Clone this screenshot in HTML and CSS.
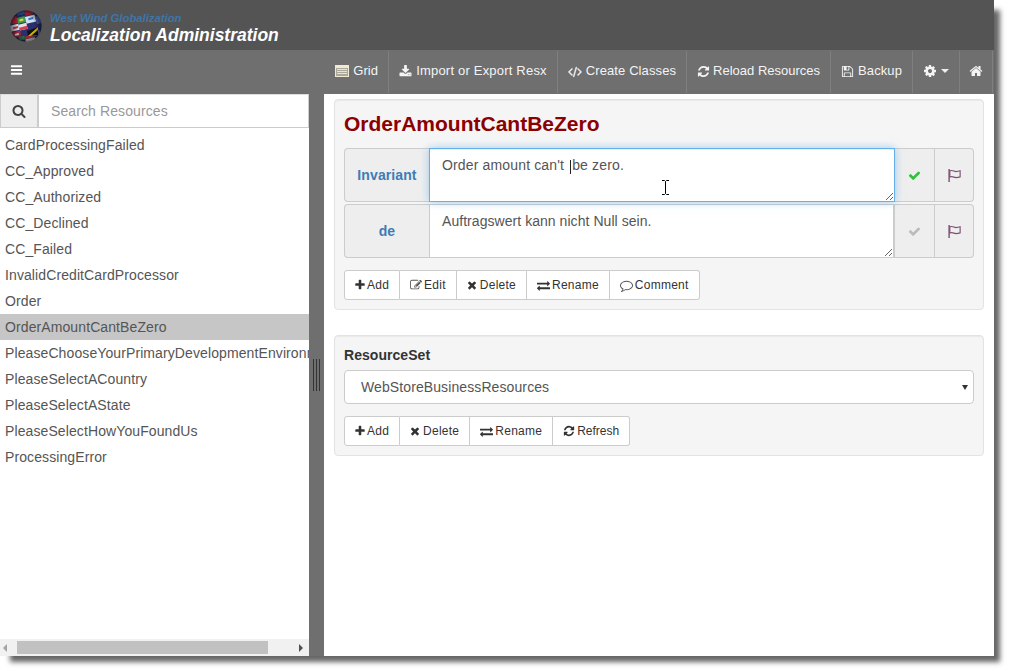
FILE: index.html
```html
<!DOCTYPE html>
<html lang="en">
<head>
<meta charset="utf-8">
<title>Localization Administration</title>
<link rel="stylesheet" href="styles.css">
</head>
<body>
<svg class="defs" width="0" height="0" aria-hidden="true">
<symbol id="i-bars" viewBox="0 0 1792 1792"><path d="M1664 1344v128q0 26-19 45t-45 19h-1408q-26 0-45-19t-19-45v-128q0-26 19-45t45-19h1408q26 0 45 19t19 45zm0-512v128q0 26-19 45t-45 19h-1408q-26 0-45-19t-19-45v-128q0-26 19-45t45-19h1408q26 0 45 19t19 45zm0-512v128q0 26-19 45t-45 19h-1408q-26 0-45-19t-19-45v-128q0-26 19-45t45-19h1408q26 0 45 19t19 45z"/></symbol>
<symbol id="i-search" viewBox="0 0 1792 1792"><path d="M1216 832q0-185-131.5-316.5t-316.5-131.5-316.5 131.5-131.5 316.5 131.5 316.5 316.5 131.5 316.5-131.5 131.5-316.5zm512 832q0 52-38 90t-90 38q-54 0-90-38l-343-342q-179 124-399 124-143 0-273.5-55.5t-225-150-150-225-55.5-273.5 55.5-273.5 150-225 225-150 273.5-55.5 273.5 55.5 225 150 150 225 55.5 273.5q0 220-124 399l343 343q37 37 37 90z"/></symbol>
<symbol id="i-check" viewBox="0 0 1792 1792"><path d="M1671 566q0 40-28 68l-724 724-136 136q-28 28-68 28t-68-28l-136-136-362-362q-28-28-28-68t28-68l136-136q28-28 68-28t68 28l294 295 656-657q28-28 68-28t68 28l136 136q28 28 28 68z"/></symbol>
<symbol id="i-plus" viewBox="0 0 1792 1792"><path d="M1600 736v192q0 40-28 68t-68 28h-416v416q0 40-28 68t-68 28h-192q-40 0-68-28t-28-68v-416h-416q-40 0-68-28t-28-68v-192q0-40 28-68t68-28h416v-416q0-40 28-68t68-28h192q40 0 68 28t28 68v416h416q40 0 68 28t28 68z"/></symbol>
<symbol id="i-times" viewBox="0 0 1792 1792"><path d="M1490 1322q0 40-28 68l-136 136q-28 28-68 28t-68-28l-294-294-294 294q-28 28-68 28t-68-28l-136-136q-28-28-28-68t28-68l294-294-294-294q-28-28-28-68t28-68l136-136q28-28 68-28t68 28l294 294 294-294q28-28 68-28t68 28l136 136q28 28 28 68t-28 68l-294 294 294 294q28 28 28 68z"/></symbol>
<symbol id="i-refresh" viewBox="0 0 1792 1792"><path d="M1639 1056q0 5-1 7-64 268-268 434.5t-478 166.5q-146 0-282.5-55t-243.5-157l-129 129q-19 19-45 19t-45-19-19-45v-448q0-26 19-45t45-19h448q26 0 45 19t19 45-19 45l-137 137q71 66 161 102t187 36q134 0 250-65t186-179q11-17 53-117 8-23 30-23h192q13 0 22.5 9.5t9.5 22.5zm25-800v448q0 26-19 45t-45 19h-448q-26 0-45-19t-19-45 19-45l138-138q-148-137-349-137-134 0-250 65t-186 179q-11 17-53 117-8 23-30 23h-199q-13 0-22.5-9.5t-9.5-22.5v-7q65-268 270-434.5t480-166.5q146 0 284 55.5t245 156.5l130-129q19-19 45-19t45 19 19 45z"/></symbol>
<symbol id="i-home" viewBox="0 0 1792 1792"><path d="M1472 992v480q0 26-19 45t-45 19h-384v-384h-256v384h-384q-26 0-45-19t-19-45v-480q0-1 .5-3t.5-3l575-474 575 474q1 2 1 6zm223-69l-62 74q-8 9-21 11h-3q-13 0-21-7l-692-577-692 577q-12 8-24 7-13-2-21-11l-62-74q-8-10-7-23.5t11-21.5l719-599q32-26 76-26t76 26l244 204v-195q0-14 9-23t23-9h192q14 0 23 9t9 23v408l219 182q10 8 11 21.5t-7 23.5z"/></symbol>
<symbol id="i-cog" viewBox="0 0 1792 1792"><path d="M1152 896q0-106-75-181t-181-75-181 75-75 181 75 181 181 75 181-75 75-181zm512-109v222q0 12-8 23t-20 13l-185 28q-19 54-39 91 35 50 107 138 10 12 10 25t-9 23q-27 37-99 108t-94 71q-12 0-26-9l-138-108q-44 23-91 38-16 136-29 186-7 28-36 28h-222q-14 0-24.5-8.5t-11.5-21.5l-28-184q-49-16-90-37l-141 107q-10 9-25 9-14 0-25-11-126-114-165-168-7-10-7-23 0-12 8-23 15-21 51-66.5t54-70.5q-27-50-41-99l-183-27q-13-2-21-12.5t-8-23.5v-222q0-12 8-23t19-13l186-28q14-46 39-92-40-57-107-138-10-12-10-24 0-10 9-23 26-36 98.5-107.5t94.5-71.5q13 0 26 10l138 107q44-23 91-38 16-136 29-186 7-28 36-28h222q14 0 24.5 8.5t11.5 21.5l28 184q49 16 90 37l142-107q9-9 24-9 13 0 25 10 129 119 165 170 7 8 7 22 0 12-8 23-15 21-51 66.5t-54 70.5q26 50 41 98l183 28q13 2 21 12.5t8 23.5z"/></symbol>
<symbol id="i-code" viewBox="0 0 1792 1792"><path stroke="currentColor" stroke-width="70" d="M553 1399l-50 50q-10 10-23 10t-23-10l-466-466q-10-10-10-23t10-23l466-466q10-10 23-10t23 10l50 50q10 10 10 23t-10 23l-393 393 393 393q10 10 10 23t-10 23zm591-1067l-373 1291q-4 13-15.5 19.5t-23.5 2.5l-62-17q-13-4-19.5-15.5t-2.5-24.5l373-1291q4-13 15.5-19.5t23.5-2.5l62 17q13 4 19.5 15.5t2.5 24.5zm657 651l-466 466q-10 10-23 10t-23-10l-50-50q-10-10-10-23t10-23l393-393-393-393q-10-10-10-23t10-23l50-50q10-10 23-10t23 10l466 466q10 10 10 23t-10 23z"/></symbol>
<symbol id="i-download" viewBox="0 0 1792 1792"><path d="M1344 1344q0-26-19-45t-45-19-45 19-19 45 19 45 45 19 45-19 19-45zm256 0q0-26-19-45t-45-19-45 19-19 45 19 45 45 19 45-19 19-45zm128-224v320q0 40-28 68t-68 28h-1472q-40 0-68-28t-28-68v-320q0-40 28-68t68-28h465l135 136q58 56 136 56t136-56l136-136h464q40 0 68 28t28 68zm-325-569q17 41-14 70l-448 448q-18 19-45 19t-45-19l-448-448q-31-29-14-70 17-39 59-39h256v-448q0-26 19-45t45-19h256q26 0 45 19t19 45v448h256q42 0 59 39z"/></symbol>
<symbol id="i-exchange" viewBox="0 0 1792 1792"><path d="M1792 1184v192q0 13-9.5 22.5t-22.5 9.5h-1376v192q0 13-9.5 22.5t-22.5 9.5q-12 0-24-10l-319-320q-9-9-9-22 0-14 9-23l320-320q9-9 23-9 13 0 22.5 9.5t9.5 22.5v192h1376q13 0 22.5 9.5t9.5 22.5zm0-544q0 14-9 23l-320 320q-9 9-23 9-13 0-22.5-9.5t-9.5-22.5v-192h-1376q-13 0-22.5-9.5t-9.5-22.5v-192q0-13 9.5-22.5t22.5-9.5h1376v-192q0-14 9-23t23-9q12 0 24 10l319 319q9 9 9 23z"/></symbol>
<symbol id="i-edit" viewBox="0 0 1792 1792"><path d="M888 1184l116-116-152-152-116 116v56h96v96h56zm440-720q-16-16-33 1l-350 350q-17 17-1 33t33-1l350-350q17-17 1-33zm80 594v190q0 119-84.5 203.5t-203.5 84.5h-832q-119 0-203.5-84.5t-84.5-203.5v-832q0-119 84.5-203.5t203.5-84.5h832q63 0 117 25 15 7 18 23 3 17-9 29l-49 49q-14 14-32 8-23-6-45-6h-832q-66 0-113 47t-47 113v832q0 66 47 113t113 47h832q66 0 113-47t47-113v-126q0-13 9-22l64-64q15-15 35-7t20 29zm-96-738l288 288-672 672h-288v-288zm444 132l-92 92-288-288 92-92q28-28 68-28t68 28l152 152q28 28 28 68t-28 68z"/></symbol>
<symbol id="i-comment" viewBox="0 0 1792 1792"><path d="M896 384q-204 0-381.5 69.5t-282 187.5-104.5 255q0 112 71.5 213.5t201.5 175.5l87 50-27 96q-24 91-70 172 152-63 275-171l43-38 57 6q69 8 130 8 204 0 381.5-69.5t282-187.5 104.5-255-104.5-255-282-187.5-381.5-69.5zm896 512q0 174-120 321.5t-326 233-450 85.5q-70 0-145-8-198 175-460 242-49 14-114 22h-5q-15 0-27-10.5t-16-27.5v-1q-3-4-.5-12t2-10 4.5-9.5l6-9 7-8.5 8-9q7-8 31-34.5t34.5-38 31-39.5 32.5-51 27-59 26-76q-157-89-247.5-220t-90.5-281q0-174 120-321.5t326-233 450-85.5 450 85.5 326 233 120 321.5z"/></symbol>
<symbol id="i-save" viewBox="0 0 1792 1792"><path d="M512 1536h768v-384h-768v384zm896 0h128v-896q0-14-10-38.5t-20-34.5l-281-281q-10-10-34-20t-39-10v416q0 40-28 68t-68 28h-576q-40 0-68-28t-28-68v-416h-128v1280h128v-416q0-40 28-68t68-28h832q40 0 68 28t28 68v416zm-384-928v-320q0-13-9.5-22.5t-22.5-9.5h-192q-13 0-22.5 9.5t-9.5 22.5v320q0 13 9.5 22.5t22.5 9.5h192q13 0 22.5-9.5t9.5-22.5zm640 32v928q0 40-28 68t-68 28h-1344q-40 0-68-28t-28-68v-1344q0-40 28-68t68-28h928q40 0 88 20t76 48l280 280q28 28 48 76t20 88z"/></symbol>
<symbol id="i-grid" viewBox="0 0 14 12"><path fill-rule="evenodd" d="M0 0h14v12h-14zM1 3v8h12v-8z"/><path d="M1 3h12v8h-12z" opacity=".45"/><path d="M2 4h10v1h-10zM2 6h10v1h-10zM2 8h10v1h-10z" opacity=".9"/></symbol>
<symbol id="i-flag" viewBox="0 0 16 16"><path d="M1.500 1h1.500v14h-1.500z"/><path fill="none" stroke="currentColor" stroke-width="1.200" d="M3 3c3-1.200 4.500 .8 6.500 .8 1.500 0 3-.3 4.500-.8v6.500c-1.500 .5-3 .7-4.500 .7-2 0-3.500-1.800-6.500-.6z"/></symbol>
</svg>

<div class="window">
  <header class="masthead">
    <svg class="logo" viewBox="0 0 32 32" width="32" height="32" aria-hidden="true">
      <defs>
        <clipPath id="globe"><circle cx="16" cy="16" r="15.500"/></clipPath>
        <radialGradient id="shade" cx=".5" cy=".5" r=".5">
          <stop offset=".55" stop-color="#000" stop-opacity="0"/>
          <stop offset="1" stop-color="#000" stop-opacity=".6"/>
        </radialGradient>
      </defs>
      <g clip-path="url(#globe)">
        <rect width="32" height="32" fill="#2a2f6e"/>
        <g transform="rotate(-14 16 16)">
          <rect x="10" y="0" width="8" height="4" fill="#3a60b0"/>
          <rect x="18" y="0" width="8" height="6" fill="#c8283c"/>
          <rect x="2" y="4" width="7" height="7" fill="#b8253a"/>
          <rect x="9" y="6" width="8" height="6" fill="#3c9a48"/>
          <rect x="11" y="8" width="4" height="2" fill="#e0d050"/>
          <rect x="17" y="7" width="10" height="7" fill="#cfe0f0"/>
          <rect x="20" y="9" width="5" height="2" fill="#3a70c0"/>
          <rect x="0" y="12" width="9" height="6" fill="#d8d8e0"/>
          <rect x="3" y="14" width="5" height="2" fill="#c03040"/>
          <rect x="9" y="13" width="8" height="6" fill="#e8e0e0"/>
          <rect x="9" y="16" width="8" height="3" fill="#d04050"/>
          <rect x="27" y="9" width="5" height="8" fill="#5060a8"/>
          <rect x="1" y="19" width="8" height="6" fill="#b02840"/>
          <rect x="3" y="21" width="4" height="2" fill="#f0f0f0"/>
          <rect x="19" y="23" width="9" height="5" fill="#7a78b0"/>
          <rect x="6" y="25" width="6" height="4" fill="#2f8a50"/>
          <rect x="12" y="26" width="8" height="3" fill="#c83040"/>
          <rect x="12" y="29" width="10" height="3" fill="#e8e8e8"/>
        </g>
        <polygon points="17,21 28,17 28,25 18,26" fill="#111"/>
        <polygon points="18,26 28,17 28,20 21,26" fill="#d8c020"/>
        <rect width="32" height="32" fill="url(#shade)"/>
      </g>
    </svg>
    <div class="brand">
      <div class="brand-sub">West Wind Globalization</div>
      <div class="brand-title">Localization Administration</div>
    </div>
  </header>

  <nav class="toolbar">
    <a class="nav-toggle"><svg class="ic ic-bars"><use href="#i-bars"/></svg></a>
    <div class="nav-items">
      <a class="nav-item nav-first"><svg class="ic ic-grid"><use href="#i-grid"/></svg>Grid</a>
      <a class="nav-item nav-wide"><svg class="ic"><use href="#i-download"/></svg>Import or Export Resx</a>
      <a class="nav-item"><svg class="ic ic-code"><use href="#i-code"/></svg>Create Classes</a>
      <a class="nav-item nav-tight"><svg class="ic"><use href="#i-refresh"/></svg>Reload Resources</a>
      <a class="nav-item"><svg class="ic"><use href="#i-save"/></svg>Backup</a>
      <a class="nav-item"><svg class="ic ic-cog"><use href="#i-cog"/></svg><span class="caret"></span></a>
      <a class="nav-item nav-home"><svg class="ic ic-home"><use href="#i-home"/></svg></a>
    </div>
  </nav>

  <div class="workspace">
    <aside class="sidebar">
      <div class="search">
        <span class="search-addon"><svg class="ic ic-search"><use href="#i-search"/></svg></span>
        <input class="search-input" type="text" placeholder="Search Resources">
      </div>
      <ul class="resource-list">
        <li>CardProcessingFailed</li>
        <li>CC_Approved</li>
        <li>CC_Authorized</li>
        <li>CC_Declined</li>
        <li>CC_Failed</li>
        <li>InvalidCreditCardProcessor</li>
        <li>Order</li>
        <li class="selected">OrderAmountCantBeZero</li>
        <li>PleaseChooseYourPrimaryDevelopmentEnvironment</li>
        <li>PleaseSelectACountry</li>
        <li>PleaseSelectAState</li>
        <li>PleaseSelectHowYouFoundUs</li>
        <li>ProcessingError</li>
      </ul>
      <div class="hscroll">
        <span class="arrow arrow-left"></span>
        <span class="thumb"></span>
        <span class="arrow arrow-right"></span>
      </div>
    </aside>

    <div class="splitter"><span class="grip"></span></div>

    <main class="content">
      <section class="well">
        <h1 class="resource-id">OrderAmountCantBeZero</h1>
        <div class="translation">
          <label class="lang">Invariant</label>
          <div class="field">
            <textarea class="text text-focus">Order amount can't  be zero.</textarea>
            <span class="text-caret"></span>
            <svg class="ibeam" viewBox="0 0 9 15" width="9" height="15" aria-hidden="true"><path fill="none" stroke="#000" d="M1 .5h2.500l1 1 1-1h2.500M4.500 1.500v12M1 14.500h2.500l1-1 1 1h2.500"/></svg>
          </div>
          <span class="addon addon-save"><svg class="ic ic-ok"><use href="#i-check"/></svg></span>
          <span class="addon addon-last"><svg class="ic ic-flag"><use href="#i-flag"/></svg></span>
        </div>
        <div class="translation">
          <label class="lang">de</label>
          <div class="field">
            <textarea class="text">Auftragswert kann nicht Null sein.</textarea>
          </div>
          <span class="addon addon-save"><svg class="ic ic-off"><use href="#i-check"/></svg></span>
          <span class="addon addon-last"><svg class="ic ic-flag"><use href="#i-flag"/></svg></span>
        </div>
        <div class="btn-group">
          <button class="btn"><svg class="ic ic-sm ic-plus"><use href="#i-plus"/></svg>Add</button>
          <button class="btn"><svg class="ic ic-sm ic-light"><use href="#i-edit"/></svg>Edit</button>
          <button class="btn"><svg class="ic ic-sm ic-times"><use href="#i-times"/></svg>Delete</button>
          <button class="btn"><svg class="ic ic-sm ic-wide"><use href="#i-exchange"/></svg>Rename</button>
          <button class="btn"><svg class="ic ic-sm ic-wide ic-light"><use href="#i-comment"/></svg>Comment</button>
        </div>
      </section>

      <section class="well well-set">
        <label class="set-label" for="set">ResourceSet</label>
        <div class="set-wrap">
          <select class="set-select" id="set"><option>WebStoreBusinessResources</option></select>
        </div>
        <div class="btn-group">
          <button class="btn"><svg class="ic ic-sm ic-plus"><use href="#i-plus"/></svg>Add</button>
          <button class="btn"><svg class="ic ic-sm ic-times"><use href="#i-times"/></svg>Delete</button>
          <button class="btn"><svg class="ic ic-sm ic-wide"><use href="#i-exchange"/></svg>Rename</button>
          <button class="btn btn-tight"><svg class="ic ic-sm"><use href="#i-refresh"/></svg>Refresh</button>
        </div>
      </section>
    </main>
  </div>
</div>
</body>
</html>
```

FILE: styles.css
```css
* { box-sizing: border-box; }
html, body { margin: 0; padding: 0; background: #fff; }
body { width: 1009px; height: 671px; overflow: hidden; font: 14px/20px "Liberation Sans", Arial, sans-serif; color: #333; }
.defs { position: absolute; }
.window { width: 994px; height: 656px; display: flex; flex-direction: column; background: #fff; box-shadow: 8px 8px 5px -2px #666; }

.ic { width: 13px; height: 13px; fill: currentColor; flex: none; }

.masthead { height: 50px; background: #545454; display: flex; align-items: flex-start; padding: 10px 0 0 10px; gap: 8px; flex: none; }
.logo { flex: none; }
.brand { padding-top: 2px; font-style: italic; font-weight: bold; }
.brand-sub { color: #3f75a8; font-size: 11.300px; line-height: 12px; }
.brand-title { color: #fff; font-size: 17.500px; line-height: 21px; margin-top: 1px; }

.toolbar { height: 44px; background: #6f6f6f; display: flex; justify-content: space-between; flex: none; }
.nav-toggle { color: #fff; display: flex; align-items: center; padding: 0 10px 4px; }
.ic-bars { width: 13px; height: 14px; }
.nav-items { display: flex; padding: 1px 1px 1px 0; }
.nav-item { display: flex; align-items: center; gap: 4px; padding: 0 10px 2px; color: #f4f4f4; border-right: 1px solid #7f7f7f; font-size: 13px; letter-spacing: .1px; }
.nav-first { padding-left: 7px; }
.nav-wide { letter-spacing: .2px; }
.nav-tight { gap: 3px; letter-spacing: 0; }
.ic-code { width: 14px; }
.ic-grid { width: 14px; height: 12px; color: #f2ead0; }
.ic-cog { width: 14px; height: 14px; }
.caret { width: 0; height: 0; border: 4px solid transparent; border-top-color: #eee; border-bottom: 0; }
.ic-home { width: 14px; height: 14px; }
.nav-home { padding: 0 9px 2px; }

.workspace { flex: 1; display: flex; min-height: 0; }
.sidebar { width: 309px; display: flex; flex-direction: column; flex: none; }
.search { height: 34px; display: flex; border: 1px solid #ccc; border-top-color: #ddd; flex: none; }
.search-addon { width: 38px; background: #eee; border-right: 2px solid #ccc; display: flex; align-items: center; justify-content: center; color: #444; flex: none; }
.ic-search { width: 14px; height: 14px; }
.search-input { flex: 1; min-width: 0; border: 0; outline: 0; padding: 0 12px; font: 14px "Liberation Sans", Arial, sans-serif; letter-spacing: .1px; color: #555; background: #fff; }
.search-input::placeholder { color: #999; opacity: 1; }
.resource-list { list-style: none; margin: 4px 0 0; padding: 0; flex: 1; overflow: hidden; min-height: 0; }
.resource-list li { height: 26px; line-height: 26px; padding-left: 5px; color: #555; white-space: nowrap; letter-spacing: .1px; }
.resource-list .selected { background: #c6c6c6; }
.hscroll { height: 17px; background: #f1f1f1; display: flex; align-items: center; flex: none; position: relative; }
.thumb { display: block; position: absolute; left: 17px; top: 2px; width: 251px; height: 13px; background: #c1c1c1; }
.arrow { position: absolute; top: 5px; width: 0; height: 0; border: 4px solid transparent; }
.arrow-left { left: 3px; border-right-color: #a3a3a3; border-left: 0; }
.arrow-right { right: 6px; border-left-color: #505050; border-right: 0; }

.splitter { width: 15px; background: #6f6f6f; display: flex; align-items: center; justify-content: center; flex: none; }
.grip { width: 7px; height: 32px; border-left: 1px solid #333; border-right: 1px solid #333; position: relative; }
.grip::after { content: ""; position: absolute; left: 2px; top: 0; width: 1px; height: 32px; background: #333; }

.content { flex: 1; min-width: 0; padding: 5px 10px 0; display: flex; flex-direction: column; gap: 25px; }
.well { background: #f5f5f5; border: 1px solid #e3e3e3; border-radius: 4px; padding: 9px; box-shadow: inset 0 1px 1px rgba(0,0,0,.05); }
.resource-id { margin: 1px 0 10px; color: #8b0000; font-size: 21px; line-height: 28px; font-weight: bold; }
.translation { display: flex; height: 54px; margin-bottom: 2px; }
.lang { width: 85px; flex: none; background: #eee; border: 1px solid #ccc; border-right: 0; border-radius: 4px 0 0 4px; color: #3e7cb6; font-weight: bold; letter-spacing: .1px; display: flex; align-items: center; justify-content: center; }
.field { flex: 1; min-width: 0; position: relative; display: flex; }
.text { width: 100%; height: 100%; margin: 0; border: 1px solid #ccc; border-right-width: 2px; padding: 6px 12px; font: 14px/20px "Liberation Sans", Arial, sans-serif; letter-spacing: .05px; color: #555; background: #fff; resize: vertical; outline: 0; overflow: hidden; display: block; }
.text-focus { border: 1px solid #66afe9; letter-spacing: .15px; box-shadow: inset 0 1px 1px rgba(0,0,0,.075), 0 0 8px rgba(102,175,233,.6); position: relative; z-index: 1; }
.text-caret { position: absolute; z-index: 2; left: 141px; top: 12px; width: 1px; height: 14px; background: #222; }
.ibeam { position: absolute; z-index: 2; left: 232px; top: 32px; }
.addon { width: 39px; flex: none; background: #eee; border: 1px solid #ccc; border-left: 0; display: flex; align-items: center; justify-content: center; }
.addon-save { width: 40px; }
.addon-last { border-radius: 0 4px 4px 0; }
.ic-ok, .ic-off { width: 13px; height: 13px; }
.ic-ok { color: #2dc237; }
.ic-off { color: #bbb; }
.ic-flag { width: 15px; height: 15px; color: #7d4f72; }

.btn-group { display: flex; margin-top: 12px; }
.btn { height: 30px; padding: 0 10px; border: 1px solid #ccc; border-left: 0; background: #fff; color: #333; font: 12px/18px "Liberation Sans", Arial, sans-serif; letter-spacing: .25px; display: flex; align-items: center; gap: 2px; }
.btn:first-child { border-left: 1px solid #ccc; border-radius: 3px 0 0 3px; }
.btn:last-child { border-radius: 0 3px 3px 0; }
.btn-tight { letter-spacing: 0; gap: 2px; }
.ic-sm { width: 12px; height: 12px; }
.ic-plus { margin: 0 -1px; }
.ic-times { margin: 0 0 0 -1px; }
.ic-wide { width: 13px; height: 13px; }
.ic-light { color: #555; }

.set-label { display: block; font-weight: bold; line-height: 20px; margin-bottom: 5px; color: #333; letter-spacing: .05px; }
.set-wrap { position: relative; }
.set-wrap::after { content: ""; position: absolute; right: 6px; top: 15px; width: 0; height: 0; border: 3.500px solid transparent; border-top: 5px solid #333; border-bottom: 0; }
.set-select { display: block; width: 100%; height: 34px; padding: 0 16px; border: 1px solid #ccc; border-radius: 4px; background: #fff; color: #555; font: 14px "Liberation Sans", Arial, sans-serif; letter-spacing: .1px; appearance: none; }
```
